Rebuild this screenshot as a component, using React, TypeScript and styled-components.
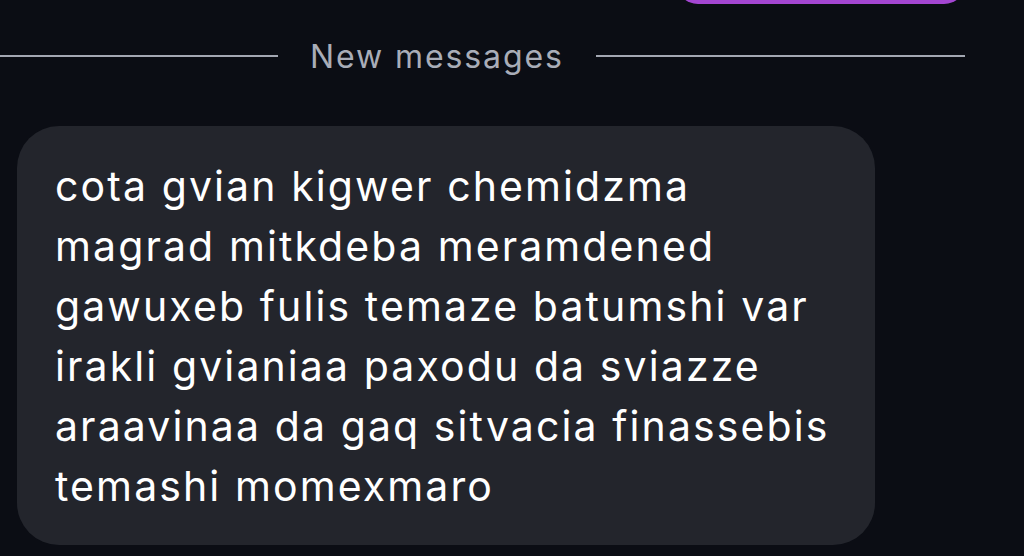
import React from 'react'
import styled, { createGlobalStyle } from 'styled-components'

const GlobalStyle = createGlobalStyle`
  html, body {
    margin: 0;
    padding: 0;
    background: #0b0d14;
    font-family: Inter, "Noto Sans", "Liberation Sans", sans-serif;
    -webkit-font-smoothing: antialiased;
  }
`

const message =
  'cota gvian kigwer chemidzma magrad mitkdeba meramdened gawuxeb fulis temaze batumshi var irakli gvianiaa paxodu da sviazze araavinaa da gaq sitvacia finassebis temashi momexmaro'

const App: React.FC = () => {
  return (
    <>
      <GlobalStyle />
      <StyledScreen>
        <StyledTopPill />
        <StyledDivider>
          <StyledLine />
          <StyledDividerLabel>New messages</StyledDividerLabel>
          <StyledLine />
        </StyledDivider>
        <StyledBubble>{message}</StyledBubble>
      </StyledScreen>
    </>
  )
}

const StyledScreen = styled.div`
  position: relative;
  width: 1024px;
  height: 556px;
  overflow: hidden;
  background: #0b0d14;
  padding: 0 59px 0 0;
  box-sizing: border-box;
  display: flex;
  flex-direction: column;
`

const StyledTopPill = styled.div`
  position: absolute;
  top: -40px;
  left: 676px;
  width: 290px;
  height: 44px;
  border-radius: 22px;
  background: #a446d2;
`

const StyledDivider = styled.div`
  display: flex;
  align-items: center;
  gap: 32px;
  margin-top: 36px;
  height: 40px;
`

const StyledLine = styled.div`
  flex: 1;
  height: 2px;
  background: #a3a7b2;
  &:first-child {
    flex: 0 0 278px;
  }
`

const StyledDividerLabel = styled.span`
  font-size: 32px;
  color: #a9adb8;
  letter-spacing: 1.9px;
`

const StyledBubble = styled.div`
  margin: 50px 0 0 17px;
  width: 858px;
  box-sizing: border-box;
  padding: 30px 38px 29px 38px;
  background: #23252c;
  border-radius: 42px;
  color: #ffffff;
  font-size: 41px;
  line-height: 60px;
  letter-spacing: 2.1px;
`

export default App
